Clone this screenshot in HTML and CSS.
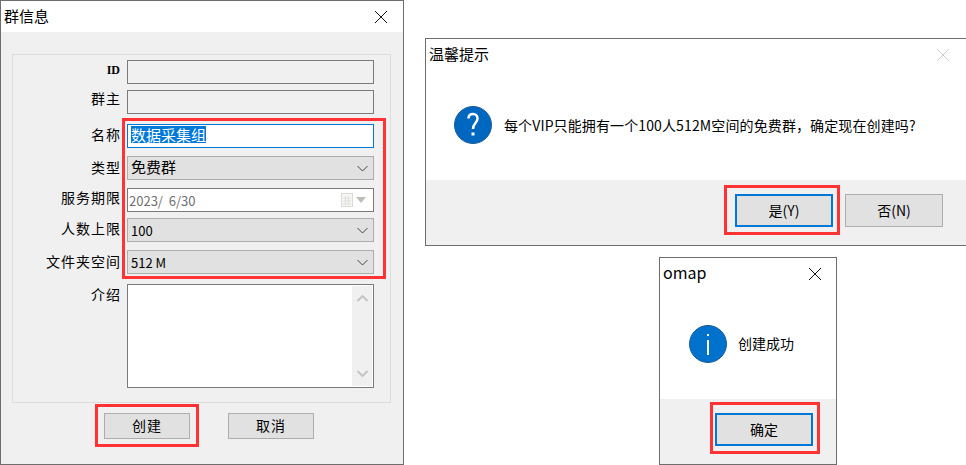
FILE: index.html
```html
<!DOCTYPE html>
<html lang="zh-CN">
<head>
<meta charset="utf-8">
<title>群信息</title>
<link rel="stylesheet" href="styles.css">
</head>
<body>
<main class="desktop">

  <section class="window win-group">
    <header class="titlebar">
      <h1 class="title">群信息</h1>
      <svg class="close" width="14" height="14" viewBox="0 0 14 14"><path d="M1 1l12 12M13 1L1 13" stroke="#111" fill="none"/></svg>
    </header>
    <div class="group-body">
      <div class="groupbox">
        <label class="lbl id">ID</label>
        <div class="field readonly"></div>
        <label class="lbl high">群主</label>
        <div class="field readonly"></div>
        <label class="lbl up">名称</label>
        <div class="field focus"><span class="selected">数据采集组</span></div>
        <label class="lbl">类型</label>
        <div class="field combo cjk"><span class="cjk-text">免费群</span><svg class="chev" width="11" height="7" viewBox="0 0 11 7"><path d="M.5 1l5 5 5-5" stroke="#444" fill="none"/></svg></div>
        <label class="lbl lift">服务期限</label>
        <div class="field date"><span class="date-text">2023/  6/30</span><span class="date-tools"><svg width="12" height="15" viewBox="0 0 12 15"><rect x=".5" y=".5" width="11" height="13" fill="#f6f6f4" stroke="#dadad6"/><path d="M2 5h8M2 8h8M2 11h8M4.500 3v9M7.500 3v9" stroke="#e0e0dc" fill="none"/></svg><svg width="10" height="6" viewBox="0 0 10 6"><path d="M0 0h10L5 6z" fill="#bdbdb5"/></svg></span></div>
        <label class="lbl up">人数上限</label>
        <div class="field combo num">100<svg class="chev" width="11" height="7" viewBox="0 0 11 7"><path d="M.5 1l5 5 5-5" stroke="#444" fill="none"/></svg></div>
        <label class="lbl">文件夹空间</label>
        <div class="field combo num">512 M<svg class="chev" width="11" height="7" viewBox="0 0 11 7"><path d="M.5 1l5 5 5-5" stroke="#444" fill="none"/></svg></div>
        <label class="lbl top">介绍</label>
        <div class="field memo">
          <div class="scroll">
            <svg width="11" height="7" viewBox="0 0 11 7"><path d="M.5 6l5-5 5 5" stroke="#c4c4c4" stroke-width="2" fill="none"/></svg>
            <svg width="11" height="7" viewBox="0 0 11 7"><path d="M.5 1l5 5 5-5" stroke="#c4c4c4" stroke-width="2" fill="none"/></svg>
          </div>
        </div>
      </div>
      <div class="group-actions">
        <button class="btn btn-form" type="button">创建</button>
        <button class="btn btn-form" type="button">取消</button>
      </div>
    </div>
  </section>

  <section class="window win-confirm">
    <header class="titlebar msg-bar">
      <h2 class="title">温馨提示</h2>
      <svg class="close" width="14" height="14" viewBox="0 0 14 14"><path d="M1 1l12 12M13 1L1 13" stroke="#cfcfcf" fill="none"/></svg>
    </header>
    <div class="msg-body confirm-body">
      <svg class="msg-icon" width="38" height="38" viewBox="0 0 38 38"><circle cx="19" cy="19" r="18.500" fill="#0067c0" stroke="#1b5a96"/><path d="M14.500 12.500c0-3 2-4.500 4.500-4.500s4.500 1.800 4.500 4.500c0 4.500-4.500 4.800-4.500 10.500" fill="none" stroke="#fff" stroke-width="2.500"/><rect x="17.500" y="26.500" width="3" height="3" fill="#fff"/></svg>
      <p class="msg-text wide">每个VIP只能拥有一个100人512M空间的免费群，确定现在创建吗?</p>
    </div>
    <footer class="msg-foot confirm-foot">
      <button class="btn btn-msg default" type="button">是(Y)</button>
      <button class="btn btn-msg" type="button">否(N)</button>
    </footer>
  </section>

  <section class="window win-info">
    <header class="titlebar info-bar">
      <h2 class="title latin">omap</h2>
      <svg class="close" width="14" height="14" viewBox="0 0 14 14"><path d="M1 1l12 12M13 1L1 13" stroke="#111" fill="none"/></svg>
    </header>
    <div class="msg-body info-body">
      <svg class="msg-icon" width="38" height="38" viewBox="0 0 38 38"><circle cx="19" cy="19" r="18.500" fill="#0072cc" stroke="#1b5a96"/><rect x="18" y="15" width="2" height="15" fill="#fff"/><rect x="18" y="9" width="2" height="2" fill="#fff"/></svg>
      <p class="msg-text raised">创建成功</p>
    </div>
    <footer class="msg-foot info-foot">
      <button class="btn btn-msg default" type="button">确定</button>
    </footer>
  </section>

  <div class="mark mark-form"></div>
  <div class="mark mark-create"></div>
  <div class="mark mark-yes"></div>
  <div class="mark mark-ok"></div>

</main>
</body>
</html>
```

FILE: styles.css
```css
* { box-sizing: border-box; }

html, body {
  margin: 0;
  padding: 0;
  background: #fff;
}

body {
  font-family: "Noto Sans CJK SC", "Noto Sans", sans-serif;
  font-size: 14px;
  color: #000;
}

.desktop {
  position: relative;
  width: 966px;
  height: 465px;
  overflow: hidden;
}

.window {
  position: absolute;
  display: flex;
  flex-direction: column;
  background: #fff;
  border: 1px solid #6d6d6d;
}

.win-group { left: 0; top: 0; width: 404px; height: 465px; }
.win-confirm { left: 425px; top: 38px; width: 545px; height: 208px; }
.win-info { left: 659px; top: 257px; width: 178px; height: 208px; }

.titlebar {
  display: flex;
  align-items: center;
  justify-content: space-between;
  flex: none;
  height: 31px;
  padding: 0 15px 0 3px;
}

.msg-bar { padding-right: 19px; }
.info-bar { padding-right: 14px; }

.title {
  margin: 0 0 2px;
  font-size: 15px;
  font-weight: 400;
  line-height: 20px;
}

.latin {
  font-size: 16px;
  margin-bottom: 4px;
}

.group-body {
  flex: 1;
  display: flex;
  flex-direction: column;
  background: #f0f0f0;
  padding: 22px 12px 0 11px;
}

.groupbox {
  display: grid;
  grid-template-columns: 107px 247px;
  grid-template-rows: 30px 34px 32px 32px 30px 32px 34px 104px;
  column-gap: 7px;
  height: 349px;
  padding: 5px 0 0 0;
  border: 1px solid #dcdcdc;
}

.lbl {
  height: 24px;
  line-height: 22px;
  text-align: right;
  font-size: 14px;
  letter-spacing: 1px;
  margin-right: -1px;
}

.id {
  font-family: "Liberation Serif", serif;
  font-size: 12px;
  font-weight: 700;
  line-height: 21px;
  letter-spacing: 0;
  margin-right: 0;
}

.high { line-height: 17px; }
.up { line-height: 20px; }
.lift { line-height: 19px; }
.top { line-height: 20px; }

.field {
  position: relative;
  display: flex;
  align-items: center;
  height: 24px;
  border: 1px solid #7a7a7a;
  padding: 0 3px;
  white-space: pre;
}

.readonly { background: #f0f0f0; }

.focus {
  background: #fff;
  border-color: #0078d7;
}

.selected {
  background: #0078d7;
  color: #fff;
  font-size: 15px;
  line-height: 17px;
  margin-bottom: 3px;
}

.combo {
  background: #e1e1e1;
  border-color: #adadad;
  justify-content: space-between;
  padding-right: 5px;
}

.cjk { font-size: 15px; }
.cjk-text { margin-bottom: 3px; }
.num { font-size: 13px; }

.date {
  background: #fff;
  justify-content: space-between;
  padding: 0 7px 0 1px;
}

.date-text {
  color: #6f6f6f;
  font-size: 13px;
}

.date-tools {
  display: flex;
  align-items: center;
  gap: 3px;
}

.memo {
  height: 104px;
  background: #fff;
  justify-content: flex-end;
  align-items: stretch;
  padding: 1px;
}

.scroll {
  width: 20px;
  display: flex;
  flex-direction: column;
  align-items: center;
  justify-content: space-between;
  padding: 9px 0;
  background: #f0f0f0;
}

.group-actions {
  display: flex;
  gap: 38px;
  padding: 10px 0 0 92px;
}

.btn {
  display: block;
  font: inherit;
  color: #000;
  background: #e1e1e1;
  border: 1px solid #adadad;
  padding: 0 0 2px;
}

.btn-form {
  width: 86px;
  height: 26px;
  font-size: 14px;
  letter-spacing: 1px;
}

.btn-msg {
  width: 98px;
  height: 33px;
  font-size: 14px;
}

.default {
  border: 2px solid #0078d7;
}

.msg-body {
  flex: 1;
  display: flex;
  align-items: center;
  background: #fff;
}

.msg-text {
  margin: 0;
  font-size: 14px;
  line-height: 20px;
}

.wide { letter-spacing: .12px; }
.raised { margin-bottom: 2px; }

.confirm-body {
  gap: 12px;
  padding: 0 0 0 28px;
}

.info-body {
  gap: 11px;
  padding: 0 0 0 29px;
}

.msg-foot {
  flex: none;
  display: flex;
  background: #f0f0f0;
}

.confirm-foot {
  height: 65px;
  gap: 12px;
  padding: 14px 0 0 309px;
}

.info-foot {
  height: 65px;
  padding: 14px 0 0 55px;
}

.mark {
  position: absolute;
  border: 3px solid #ff3333;
}

.mark-form { left: 122px; top: 118px; width: 264px; height: 161px; }
.mark-create { left: 95px; top: 404px; width: 104px; height: 43px; }
.mark-yes { left: 724px; top: 185px; width: 116px; height: 50px; }
.mark-ok { left: 710px; top: 402px; width: 110px; height: 52px; }
```
